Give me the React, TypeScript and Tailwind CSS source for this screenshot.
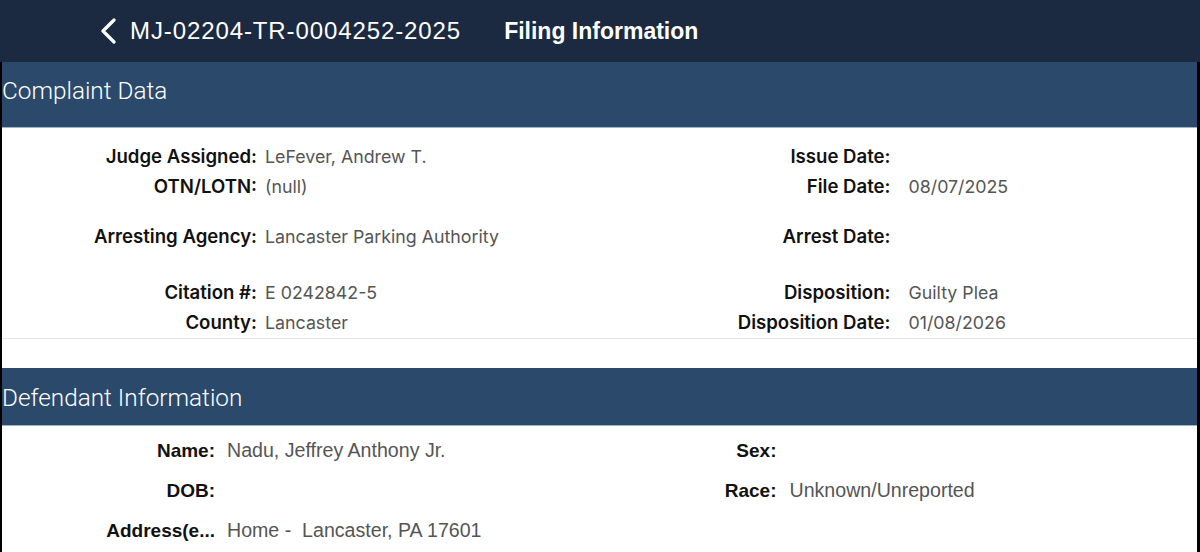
import React from "react";

type Field = { label: string; value?: string };

function FieldRow({
  label,
  value,
  labelWidth,
  gap,
  className = "",
}: Field & { labelWidth: string; gap: string; className?: string }) {
  return (
    <div className={`flex items-center ${className}`}>
      <div className={`${labelWidth} shrink-0 text-right font-semibold text-[#111]`}>{label}</div>
      <div className={`${gap} whitespace-pre text-[#555]`}>{value}</div>
    </div>
  );
}

function SectionHeader({ title, className = "" }: { title: string; className?: string }) {
  return (
    <div
      className={`bg-[#2b4a6b] border-b border-[#9fb2c6] text-white text-[24.3px] font-light ${className}`}
      style={{ fontFamily: "Roboto, 'Liberation Sans', sans-serif" }}
    >
      {title}
    </div>
  );
}

export default function App() {
  const inter = { fontFamily: "Inter, 'Liberation Sans', sans-serif" };
  const helv = { fontFamily: "'Liberation Sans', Arial, sans-serif" };

  return (
    <div className="w-[1200px] h-[552px] overflow-hidden bg-black" style={helv}>
      {/* Nav bar */}
      <div className="h-[62px] bg-[#1b2a41] flex items-center">
        <svg className="ml-[99px] w-[20px] h-[26px]" viewBox="0 0 20 26" fill="none">
          <path d="M15 2 L4 13 L15 24" stroke="white" strokeWidth="3.2" strokeLinecap="round" strokeLinejoin="round" />
        </svg>
        <span className="ml-[11px] text-white text-[24px] tracking-[0.9px]">MJ-02204-TR-0004252-2025</span>
        <span className="ml-[43px] text-white text-[23px] font-bold">Filing Information</span>
      </div>

      <div className="ml-[2px] mr-[3px] bg-white h-[490px]">
        <SectionHeader title="Complaint Data" className="h-[66px] pt-[11px]" />

        {/* Complaint data */}
        <div className="text-[17.8px] pt-[14px]" style={inter}>
          <div className="grid grid-cols-2">
            <div className="flex flex-col [&>div>div:first-child]:text-[18.6px]">
              <FieldRow label="Judge Assigned:" value="LeFever, Andrew T." labelWidth="w-[255px]" gap="ml-[8px]" className="h-[30px]" />
              <FieldRow label="OTN/LOTN:" value="(null)" labelWidth="w-[255px]" gap="ml-[8px]" className="h-[30px]" />
              <FieldRow label="Arresting Agency:" value="Lancaster Parking Authority" labelWidth="w-[255px]" gap="ml-[8px]" className="h-[30px] mt-[20px]" />
              <FieldRow label="Citation #:" value="E 0242842-5" labelWidth="w-[255px]" gap="ml-[8px]" className="h-[30px] mt-[26px]" />
              <FieldRow label="County:" value="Lancaster" labelWidth="w-[255px]" gap="ml-[8px]" className="h-[30px]" />
            </div>
            <div className="flex flex-col [&>div>div:first-child]:text-[18.6px]">
              <FieldRow label="Issue Date:" labelWidth="w-[291px]" gap="ml-[18px]" className="h-[30px]" />
              <FieldRow label="File Date:" value="08/07/2025" labelWidth="w-[291px]" gap="ml-[18px]" className="h-[30px]" />
              <FieldRow label="Arrest Date:" labelWidth="w-[291px]" gap="ml-[18px]" className="h-[30px] mt-[20px]" />
              <FieldRow label="Disposition:" value="Guilty Plea" labelWidth="w-[291px]" gap="ml-[18px]" className="h-[30px] mt-[26px]" />
              <FieldRow label="Disposition Date:" value="01/08/2026" labelWidth="w-[291px]" gap="ml-[18px]" className="h-[30px]" />
            </div>
          </div>
          <div className="h-px bg-[#e3e3e3]" />
        </div>

        <div className="h-[29px]" />
        <SectionHeader title="Defendant Information" className="h-[58px] pt-[12px]" />

        {/* Defendant */}
        <div className="grid grid-cols-2 pt-[5px] text-[19.6px]">
          <div className="flex flex-col">
            <FieldRow label="Name:" value="Nadu, Jeffrey Anthony Jr." labelWidth="w-[213px] text-[19px]" gap="ml-[12px]" className="h-[40px]" />
            <FieldRow label="DOB:" labelWidth="w-[213px] text-[19px]" gap="ml-[12px]" className="h-[40px]" />
            <FieldRow label="Address(e..." value="Home -  Lancaster, PA 17601" labelWidth="w-[213px] text-[19px]" gap="ml-[12px]" className="h-[40px]" />
          </div>
          <div className="flex flex-col">
            <FieldRow label="Sex:" labelWidth="w-[177px] text-[19px]" gap="ml-[13px]" className="h-[40px]" />
            <FieldRow label="Race:" value="Unknown/Unreported" labelWidth="w-[177px] text-[19px]" gap="ml-[13px]" className="h-[40px]" />
          </div>
        </div>
      </div>
    </div>
  );
}
